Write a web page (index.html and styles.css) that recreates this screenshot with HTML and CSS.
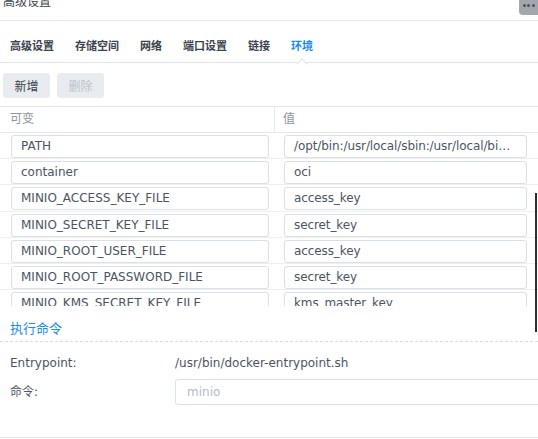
FILE: index.html
```html
<!DOCTYPE html>
<html lang="zh">
<head>
<meta charset="utf-8">
<link rel="stylesheet" href="styles.css">
</head>
<body>
<div class="page">
  <div class="titlebar">
    <span class="title">高级设置</span>
    <div class="more"><span></span><span></span><span></span></div>
  </div>
  <div class="tabs">
    <span class="tab">高级设置</span>
    <span class="tab">存储空间</span>
    <span class="tab">网络</span>
    <span class="tab">端口设置</span>
    <span class="tab">链接</span>
    <span class="tab active">环境<i class="notch"></i></span>
  </div>
  <div class="toolbar">
    <button class="btn">新增</button>
    <button class="btn disabled">删除</button>
  </div>
  <div class="table">
    <div class="thead">
      <div class="th th-key">可变</div>
      <div class="th th-val">值</div>
    </div>
    <div class="tbody">
      <div class="row"><div class="cell ck"><div class="field">PATH</div></div><div class="cell cv"><div class="field">/opt/bin:/usr/local/sbin:/usr/local/bin:/usr/sbin:/usr/bin:/sbin:/bin</div></div></div>
      <div class="row"><div class="cell ck"><div class="field">container</div></div><div class="cell cv"><div class="field">oci</div></div></div>
      <div class="row"><div class="cell ck"><div class="field">MINIO_ACCESS_KEY_FILE</div></div><div class="cell cv"><div class="field">access_key</div></div></div>
      <div class="row"><div class="cell ck"><div class="field">MINIO_SECRET_KEY_FILE</div></div><div class="cell cv"><div class="field">secret_key</div></div></div>
      <div class="row"><div class="cell ck"><div class="field">MINIO_ROOT_USER_FILE</div></div><div class="cell cv"><div class="field">access_key</div></div></div>
      <div class="row"><div class="cell ck"><div class="field">MINIO_ROOT_PASSWORD_FILE</div></div><div class="cell cv"><div class="field">secret_key</div></div></div>
      <div class="row"><div class="cell ck"><div class="field">MINIO_KMS_SECRET_KEY_FILE</div></div><div class="cell cv"><div class="field">kms_master_key</div></div></div>
    </div>
  </div>
  <div class="section-title">执行命令</div>
  <div class="cmd">
    <div class="cmd-row">
      <span class="label">Entrypoint:</span>
      <span class="value">/usr/bin/docker-entrypoint.sh</span>
    </div>
    <div class="cmd-row cmd-input-row">
      <span class="label">命令:</span>
      <div class="cmd-input">minio</div>
    </div>
  </div>
  <div class="footer-line"></div>
  <div class="scroll-thumb"></div>
</div>
</body>
</html>
```
FILE: styles.css
```css
html, body {
  margin: 0;
  padding: 0;
  background: #ffffff;
}
.page {
  position: relative;
  width: 538px;
  height: 439px;
  overflow: hidden;
  font-family: "DejaVu Sans", "Noto Sans CJK SC", sans-serif;
  font-size: 12px;
  color: #4b5562;
}
.titlebar {
  display: flow-root;
  height: 20px;
  border-bottom: 1px solid #e1e7ee;
  position: relative;
}
.title {
  display: block;
  margin-top: -6px;
  padding-left: 3px;
  line-height: 16px;
  font-size: 12px;
  color: #3a434e;
}
.more {
  position: absolute;
  right: 0;
  top: 0;
  width: 19px;
  height: 15px;
  background: #a3a7ad;
  border-bottom-left-radius: 4px;
  display: flex;
  justify-content: center;
  align-items: flex-start;
  gap: 1.5px;
  padding-top: 4px;
  box-sizing: border-box;
}
.more span {
  width: 3px;
  height: 3px;
  border-radius: 50%;
  background: #4e535a;
}
.tabs {
  height: 42px;
  box-sizing: border-box;
  padding-top: 10px;
  padding-left: 10px;
  border-bottom: 1px solid #dfe5ec;
  display: flex;
  align-items: center;
  gap: 21px;
}
.tab {
  position: relative;
  font-size: 11px;
  font-weight: bold;
  color: #3a434e;
  line-height: 16px;
}
.tab.active {
  color: #1a8cf0;
}
.notch {
  position: absolute;
  left: 50%;
  bottom: -13px;
  width: 7px;
  height: 7px;
  margin-left: -4px;
  background: #ffffff;
  border-top: 1px solid #dfe5ec;
  border-left: 1px solid #dfe5ec;
  transform: rotate(45deg);
}
.toolbar {
  display: flex;
  gap: 7px;
  padding: 10px 0 8px 3px;
  border-bottom: 1px solid #e3e8ee;
}
.btn {
  width: 47px;
  height: 25px;
  border: none;
  border-radius: 3px;
  background: #e8ecf1;
  font-family: "DejaVu Sans", "Noto Sans CJK SC", sans-serif;
  font-size: 12px;
  color: #3a434e;
  padding: 0;
}
.btn.disabled {
  color: #bcc3cb;
}
.thead {
  display: flex;
  height: 25px;
  border-bottom: 1px solid #e3e8ee;
}
.th {
  line-height: 24px;
  color: #8b949e;
  font-size: 12px;
}
.th-key {
  width: 275px;
  box-sizing: border-box;
  padding-left: 10px;
  border-right: 1px solid #e6eaef;
}
.th-val {
  padding-left: 8px;
}
.tbody {
  height: 173px;
  overflow: hidden;
}
.row {
  display: flex;
  height: 26.2px;
  box-sizing: border-box;
  border-bottom: 1px solid #edf0f3;
  padding-top: 2px;
}
.cell {
  box-sizing: border-box;
}
.ck {
  width: 276px;
  padding-left: 11px;
  padding-right: 7px;
}
.cv {
  width: 262px;
  padding-left: 8px;
  padding-right: 11px;
}
.field {
  height: 23px;
  box-sizing: border-box;
  border: 1px solid #d9e0e7;
  border-radius: 3px;
  padding: 0 10px 0 9px;
  line-height: 21px;
  white-space: nowrap;
  overflow: hidden;
  text-overflow: ellipsis;
  color: #4b5562;
}
.cv .field {
  letter-spacing: -0.1px;
}
.section-title {
  padding: 14px 0 4px 10px;
  line-height: 17px;
  font-size: 13px;
  color: #1a8cf0;
  border-bottom: 1px dashed #d6dee7;
}
.cmd {
  padding: 12px 0 0 10px;
}
.cmd-row {
  display: flex;
  align-items: center;
}
.label {
  width: 165px;
  flex: none;
  line-height: 18px;
}
.value {
  line-height: 18px;
}
.cmd-input-row {
  margin-top: 7px;
}
.cmd-input {
  flex: none;
  width: 420px;
  height: 26px;
  box-sizing: border-box;
  border: 1px solid #d9e0e7;
  border-radius: 3px;
  padding-left: 11px;
  line-height: 24px;
  color: #b4bbc3;
}
.footer-line {
  margin-top: 32px;
  border-top: 1px solid #dfe5ec;
}
.scroll-thumb {
  position: absolute;
  left: 535px;
  top: 193px;
  width: 2px;
  height: 139px;
  background: #2b2e33;
}
```
